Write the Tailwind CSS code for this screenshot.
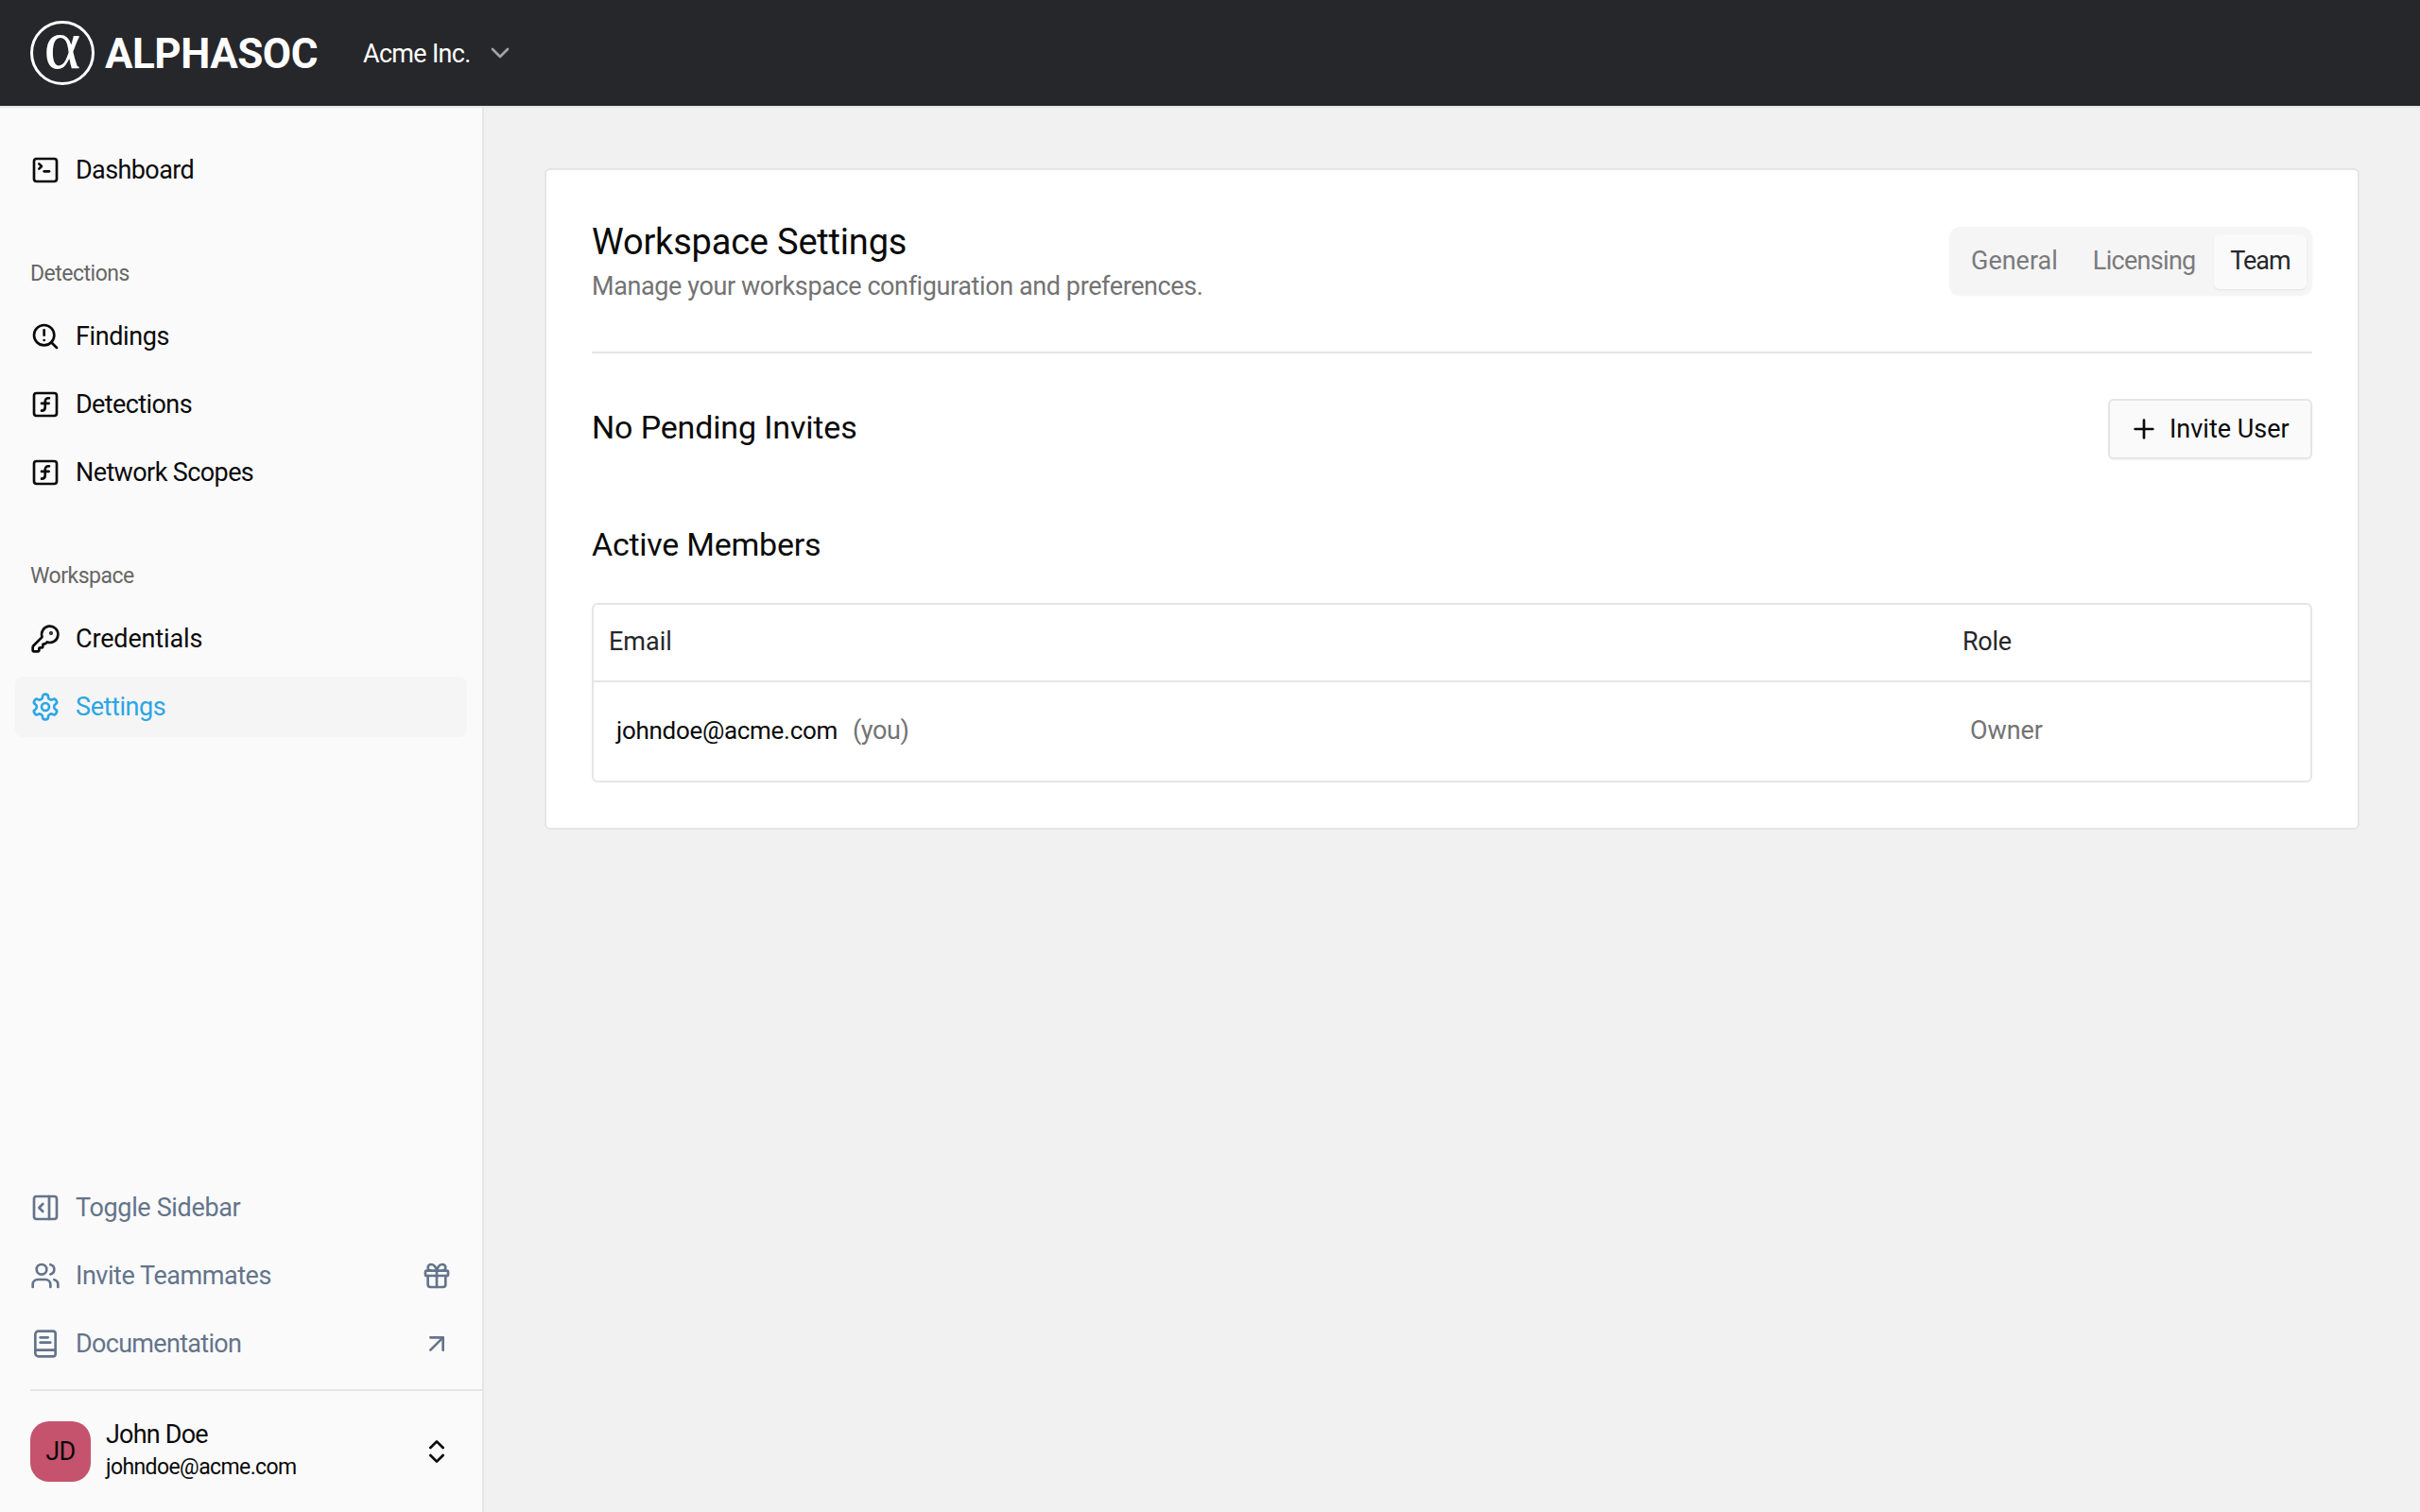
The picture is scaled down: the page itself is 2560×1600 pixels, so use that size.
<!DOCTYPE html>
<html lang="en">
<head>
<meta charset="utf-8">
<title>AlphaSOC</title>
<script src="https://cdn.jsdelivr.net/npm/@tailwindcss/browser@4"></script>
</head>
<body class="font-['Roboto',sans-serif] text-[27px] bg-[#f1f1f1] text-[#0a0a0a]">
<div class="w-[2560px] h-[1600px] flex flex-col overflow-hidden">
  <header class="h-[114px] shrink-0 bg-[#26272a] border-b-2 border-[#e5e5e5] flex items-center pl-8 text-white">
    <svg class="w-[68px] h-[68px] shrink-0 overflow-visible" viewBox="0 0 68 68"><circle cx="34" cy="34" r="32.5" fill="none" stroke="currentColor" stroke-width="3"/><text x="34" y="50" text-anchor="middle" font-family="Liberation Serif, serif" font-size="74" fill="currentColor">α</text></svg>
    <span class="ml-[11px] pt-[2px] text-[44px] font-bold leading-none tracking-[-0.5px] w-[240px]">ALPHASOC</span>
    <span class="ml-[33px] pt-[2px] tracking-[-0.7px]">Acme Inc.</span>
    <svg class="ml-[15px] w-8 h-8 text-[#a3a3a3]" viewBox="0 0 24 24" fill="none" stroke="currentColor" stroke-width="2" stroke-linecap="round" stroke-linejoin="round"><path d="m6 9 6 6 6-6"/></svg>
  </header>
  <div class="flex flex-1 min-h-0">
    <aside class="w-[512px] shrink-0 bg-[#fafafa] border-r-2 border-[#e5e5e5] flex flex-col">
      <nav class="flex-1 flex flex-col px-4 pt-[34px] tracking-[-0.6px]">
        <a class="h-16 flex items-center gap-4 px-4 rounded-lg">
          <svg class="w-8 h-8 shrink-0" viewBox="0 0 24 24" fill="none" stroke="currentColor" stroke-width="2" stroke-linecap="round" stroke-linejoin="round"><path d="m7 11 2-2-2-2"/><path d="M11 13h4"/><rect width="18" height="18" x="3" y="3" rx="2"/></svg>
          Dashboard</a>
        <div class="mt-[54px] h-12 flex items-center px-4 text-[23px] text-[#666] tracking-[-0.5px]">Detections</div>
        <div class="flex flex-col gap-2 mt-[10px]">
          <a class="h-16 flex items-center gap-4 px-4 tracking-[-0.4px]">
            <svg class="w-8 h-8 shrink-0" viewBox="0 0 24 24" fill="none" stroke="currentColor" stroke-width="2" stroke-linecap="round" stroke-linejoin="round"><circle cx="11" cy="11" r="8"/><path d="m21 21-4.3-4.3"/><path d="M11 7v4"/><path d="M11 15h.01"/></svg>
            Findings</a>
          <a class="h-16 flex items-center gap-4 px-4">
            <svg class="w-8 h-8 shrink-0" viewBox="0 0 24 24" fill="none" stroke="currentColor" stroke-width="2" stroke-linecap="round" stroke-linejoin="round"><rect width="18" height="18" x="3" y="3" rx="2"/><path d="M9 17c2 0 2.8-1 2.8-2.8V10c0-2 1-3.3 3.2-3"/><path d="M9 11.2h5.7"/></svg>
            Detections</a>
          <a class="h-16 flex items-center gap-4 px-4">
            <svg class="w-8 h-8 shrink-0" viewBox="0 0 24 24" fill="none" stroke="currentColor" stroke-width="2" stroke-linecap="round" stroke-linejoin="round"><rect width="18" height="18" x="3" y="3" rx="2"/><path d="M9 17c2 0 2.8-1 2.8-2.8V10c0-2 1-3.3 3.2-3"/><path d="M9 11.2h5.7"/></svg>
            Network Scopes</a>
        </div>
        <div class="mt-[54px] h-12 flex items-center px-4 text-[23px] text-[#666] tracking-[-0.5px]">Workspace</div>
        <div class="flex flex-col gap-2 mt-[10px]">
          <a class="h-16 flex items-center gap-4 px-4 tracking-[-0.15px]">
            <svg class="w-8 h-8 shrink-0" viewBox="0 0 24 24" fill="none" stroke="currentColor" stroke-width="2" stroke-linecap="round" stroke-linejoin="round"><path d="M2.586 17.414A2 2 0 0 0 2 18.828V21a1 1 0 0 0 1 1h3a1 1 0 0 0 1-1v-1a1 1 0 0 1 1-1h1a1 1 0 0 0 1-1v-1a1 1 0 0 1 1-1h.172a2 2 0 0 0 1.414-.586l.814-.814a6.5 6.5 0 1 0-4-4z"/><circle cx="16.5" cy="7.5" r=".5" fill="currentColor"/></svg>
            Credentials</a>
          <a class="h-16 flex items-center gap-4 px-4 rounded-lg bg-[#f5f5f5] text-[#2ba6e3] tracking-[-0.4px]">
            <svg class="w-8 h-8 shrink-0" viewBox="0 0 24 24" fill="none" stroke="currentColor" stroke-width="2" stroke-linecap="round" stroke-linejoin="round"><path d="M12.22 2h-.44a2 2 0 0 0-2 2v.18a2 2 0 0 1-1 1.73l-.43.25a2 2 0 0 1-2 0l-.15-.08a2 2 0 0 0-2.73.73l-.22.38a2 2 0 0 0 .73 2.73l.15.1a2 2 0 0 1 1 1.72v.51a2 2 0 0 1-1 1.74l-.15.09a2 2 0 0 0-.73 2.73l.22.38a2 2 0 0 0 2.73.73l.15-.08a2 2 0 0 1 2 0l.43.25a2 2 0 0 1 1 1.73V20a2 2 0 0 0 2 2h.44a2 2 0 0 0 2-2v-.18a2 2 0 0 1 1-1.73l.43-.25a2 2 0 0 1 2 0l.15.08a2 2 0 0 0 2.73-.73l.22-.39a2 2 0 0 0-.73-2.73l-.15-.08a2 2 0 0 1-1-1.74v-.5a2 2 0 0 1 1-1.74l.15-.09a2 2 0 0 0 .73-2.73l-.22-.38a2 2 0 0 0-2.73-.73l-.15.08a2 2 0 0 1-2 0l-.43-.25a2 2 0 0 1-1-1.73V4a2 2 0 0 0-2-2z"/><circle cx="12" cy="12" r="3"/></svg>
            Settings</a>
        </div>
      </nav>
      <div class="flex flex-col gap-2 px-4 pb-[16px] text-[#64748b]">
        <a class="h-16 flex items-center gap-4 px-4 tracking-[-0.35px]">
          <svg class="w-8 h-8 shrink-0" viewBox="0 0 24 24" fill="none" stroke="currentColor" stroke-width="2" stroke-linecap="round" stroke-linejoin="round"><rect width="18" height="18" x="3" y="3" rx="2"/><path d="M15 3v18"/><path d="m10 15-3-3 3-3"/></svg>
          Toggle Sidebar</a>
        <a class="h-16 flex items-center gap-4 px-4 tracking-[-0.45px]">
          <svg class="w-8 h-8 shrink-0" viewBox="0 0 24 24" fill="none" stroke="currentColor" stroke-width="2" stroke-linecap="round" stroke-linejoin="round"><path d="M16 21v-2a4 4 0 0 0-4-4H6a4 4 0 0 0-4 4v2"/><circle cx="9" cy="7" r="4"/><path d="M22 21v-2a4 4 0 0 0-3-3.87"/><path d="M16 3.13a4 4 0 0 1 0 7.75"/></svg>
          <span class="flex-1">Invite Teammates</span>
          <svg class="w-8 h-8 shrink-0" viewBox="0 0 24 24" fill="none" stroke="currentColor" stroke-width="2" stroke-linecap="round" stroke-linejoin="round"><rect x="3" y="8" width="18" height="4" rx="1"/><path d="M12 8v13"/><path d="M19 12v7a2 2 0 0 1-2 2H7a2 2 0 0 1-2-2v-7"/><path d="M7.5 8a2.5 2.5 0 0 1 0-5A4.8 8 0 0 1 12 8a4.8 8 0 0 1 4.5-5 2.5 2.5 0 0 1 0 5"/></svg>
        </a>
        <a class="h-16 flex items-center gap-4 px-4 tracking-[-0.7px]">
          <svg class="w-8 h-8 shrink-0" viewBox="0 0 24 24" fill="none" stroke="currentColor" stroke-width="2" stroke-linecap="round" stroke-linejoin="round"><path d="M4 19.5v-15A2.5 2.5 0 0 1 6.5 2H18a2 2 0 0 1 2 2v16a2 2 0 0 1-2 2H6.5a2.5 2.5 0 0 1 -2.5-2.5z"/><path d="M4 17h16"/><path d="M8 11h8"/><path d="M8 7h6"/></svg>
          <span class="flex-1">Documentation</span>
          <svg class="w-8 h-8 shrink-0" viewBox="0 0 24 24" fill="none" stroke="currentColor" stroke-width="2" stroke-linecap="round" stroke-linejoin="round"><path d="M7 7h10v10"/><path d="M7 17 17 7"/></svg>
        </a>
      </div>
      <div class="ml-8 border-t-2 border-[#e5e5e5] h-[130px] flex items-center pr-8 gap-4">
        <div class="w-16 h-16 rounded-[20px] bg-[#c5536d] flex items-center justify-center tracking-[-0.5px]">JD</div>
        <div class="flex-1 flex flex-col pb-[3px]">
          <span class="leading-[36px] tracking-[-0.8px]">John Doe</span>
          <span class="text-[23px] leading-[34px] tracking-[-0.6px]">johndoe@acme.com</span>
        </div>
        <svg class="w-8 h-8 shrink-0" viewBox="0 0 24 24" fill="none" stroke="currentColor" stroke-width="2" stroke-linecap="round" stroke-linejoin="round"><path d="m7 15 5 5 5-5"/><path d="m7 9 5-5 5 5"/></svg>
      </div>
    </aside>
    <main class="flex-1 p-16">
      <section class="bg-white border-2 border-[#e5e5e5] rounded-md px-12 pt-[48px] pb-12">
        <div class="flex justify-between items-start h-[146px] border-b-2 border-[#e5e5e5]">
          <div class="pt-[2px]">
            <h1 class="text-[38px] leading-[52px] tracking-[-0.2px]">Workspace Settings</h1>
            <p class="leading-[40px] mt-[1px] text-[#737373] tracking-[-0.4px]">Manage your workspace configuration and preferences.</p>
          </div>
          <div class="mt-3 h-[72px] w-[384px] rounded-xl bg-[#f5f5f5] shadow-[0_1px_2px_rgba(0,0,0,0.05)] flex items-start pt-2 pl-[23px] pr-[6px]">
            <span class="h-[56px] flex items-center text-[#7a7a7d]">General</span>
            <span class="ml-[37px] h-[56px] flex items-center text-[#7a7a7d] tracking-[-0.7px]">Licensing</span>
            <span class="ml-auto h-[58px] w-[98px] pb-[2px] flex items-center justify-center rounded-md bg-[#fafafa] shadow-[0_1px_2px_rgba(0,0,0,0.08)] text-[#27272a] tracking-[-1px]">Team</span>
          </div>
        </div>
        <div class="mt-[48px] h-[64px] flex items-center justify-between">
          <h2 class="text-[34px] tracking-[-0.15px] pb-[3px]">No Pending Invites</h2>
          <button class="h-[64px] w-[216px] flex items-center gap-[16px] pl-[25px] border-2 border-[#e5e5e5] rounded-md bg-[#fafafa] shadow-[0_1px_2px_rgba(0,0,0,0.05)]">
            <svg class="w-8 h-8 shrink-0 -mx-[5px]" viewBox="0 0 24 24" fill="none" stroke="currentColor" stroke-width="2" stroke-linecap="round" stroke-linejoin="round"><path d="M5 12h14"/><path d="M12 5v14"/></svg>
            Invite User</button>
        </div>
        <h2 class="mt-[64px] mb-[36px] text-[34px] leading-[52px] tracking-[-0.25px]">Active Members</h2>
        <div class="mt-[35px] h-[190px] border-2 border-[#e5e5e5] rounded-md">
          <div class="h-[82px] grid grid-cols-[1432px_1fr] items-center border-b-2 border-[#e5e5e5] text-[#27272a]">
            <span class="pl-4 pb-[1px]">Email</span>
            <span class="pl-4 pb-[1px] tracking-[-0.3px]">Role</span>
          </div>
          <div class="h-[104px] grid grid-cols-[1432px_1fr] items-center pb-[2px]">
            <span class="pl-6 flex items-center gap-4"><span class="text-[26px] tracking-[-0.3px]">johndoe@acme.com</span><span class="text-[#737373] tracking-[-0.4px]">(you)</span></span>
            <span class="pl-6 text-[#737373] tracking-[-0.1px]">Owner</span>
          </div>
        </div>
      </section>
    </main>
  </div>
</div>
</body>
</html>
